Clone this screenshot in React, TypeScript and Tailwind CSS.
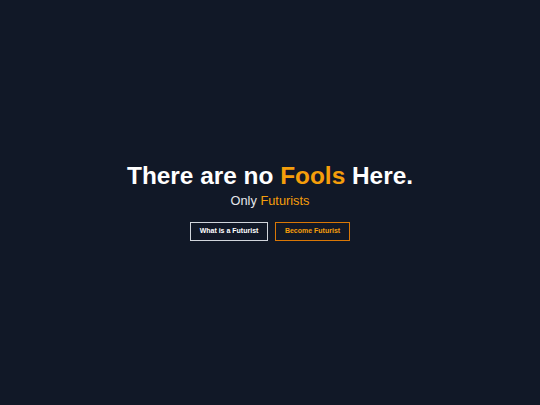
export default function App() {
  return (
    <div
      className="min-h-screen w-full bg-[#111827] flex flex-col items-center justify-center"
      style={{ fontFamily: '"Liberation Sans", Arial, sans-serif' }}
    >
      <h1 className="text-[24.4px] font-bold text-white leading-none">
        There are no <span className="text-[#f59e0b]">Fools</span> Here.
      </h1>
      <p className="mt-[6px] text-[12.8px] text-gray-200 leading-none">
        Only <span className="text-[#f59e0b]">Futurists</span>
      </p>
      <div className="mt-[14px] flex gap-[7px]">
        <button className="h-[19px] w-[78px] border border-gray-300 text-[7px] font-bold text-white">
          What is a Futurist
        </button>
        <button className="h-[19px] w-[75px] border border-[#d97706] text-[7px] font-bold text-[#f59e0b]">
          Become Futurist
        </button>
      </div>
    </div>
  );
}
